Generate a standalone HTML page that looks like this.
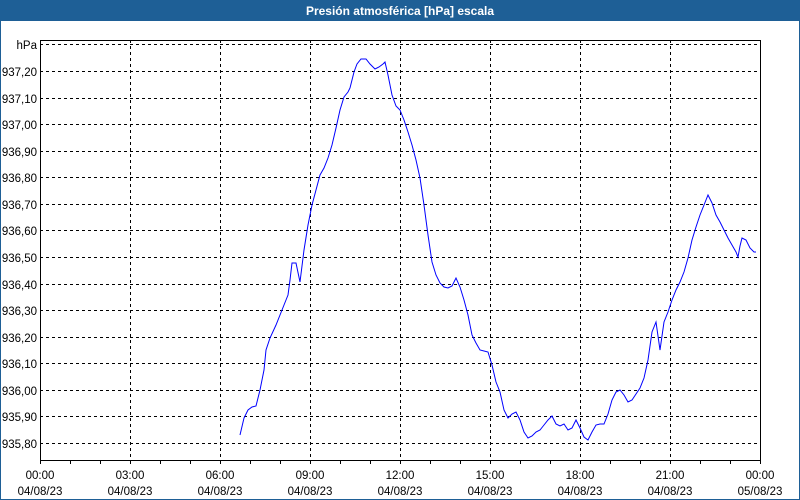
<!DOCTYPE html>
<html><head><meta charset="utf-8"><style>
html,body{margin:0;padding:0;width:800px;height:500px;overflow:hidden;background:#fff;}
svg{display:block;font-family:"Liberation Sans",Arial,sans-serif;}
</style></head><body>
<svg width="800" height="500" viewBox="0 0 800 500" xmlns="http://www.w3.org/2000/svg">
<rect x="0" y="0" width="800" height="500" fill="#fff"/>
<rect x="0.5" y="0.5" width="799" height="499" fill="none" stroke="#1e5f96"/>
<rect x="0" y="0" width="800" height="21" fill="#1e5f96"/>
<text x="400" y="15" fill="#fff" font-size="12" font-weight="bold" text-anchor="middle">Presión atmosférica [hPa] escala</text>
<g stroke="#000" stroke-dasharray="3,3" stroke-width="1">
<line x1="40" y1="44.5" x2="760" y2="44.5"/>
<line x1="40" y1="71.5" x2="760" y2="71.5"/>
<line x1="40" y1="98.5" x2="760" y2="98.5"/>
<line x1="40" y1="124.5" x2="760" y2="124.5"/>
<line x1="40" y1="151.5" x2="760" y2="151.5"/>
<line x1="40" y1="177.5" x2="760" y2="177.5"/>
<line x1="40" y1="204.5" x2="760" y2="204.5"/>
<line x1="40" y1="230.5" x2="760" y2="230.5"/>
<line x1="40" y1="257.5" x2="760" y2="257.5"/>
<line x1="40" y1="284.5" x2="760" y2="284.5"/>
<line x1="40" y1="310.5" x2="760" y2="310.5"/>
<line x1="40" y1="337.5" x2="760" y2="337.5"/>
<line x1="40" y1="363.5" x2="760" y2="363.5"/>
<line x1="40" y1="390.5" x2="760" y2="390.5"/>
<line x1="40" y1="416.5" x2="760" y2="416.5"/>
<line x1="40" y1="443.5" x2="760" y2="443.5"/>
<line x1="130.5" y1="40" x2="130.5" y2="460"/>
<line x1="220.5" y1="40" x2="220.5" y2="460"/>
<line x1="310.5" y1="40" x2="310.5" y2="460"/>
<line x1="400.5" y1="40" x2="400.5" y2="460"/>
<line x1="490.5" y1="40" x2="490.5" y2="460"/>
<line x1="580.5" y1="40" x2="580.5" y2="460"/>
<line x1="670.5" y1="40" x2="670.5" y2="460"/>
</g>
<g stroke="#000" stroke-width="1" fill="none">
<path d="M40.5 40V460.5H760.5V40M40 40.5H760.5"/>
<path d="M40.5 460v4M70.5 460v4M100.5 460v4M130.5 460v4M160.5 460v4M190.5 460v4M220.5 460v4M250.5 460v4M280.5 460v4M310.5 460v4M340.5 460v4M370.5 460v4M400.5 460v4M430.5 460v4M460.5 460v4M490.5 460v4M520.5 460v4M550.5 460v4M580.5 460v4M610.5 460v4M640.5 460v4M670.5 460v4M700.5 460v4M730.5 460v4M760.5 460v4"/>
</g>
<g font-size="11.5" fill="#000" text-anchor="end">
<text x="37" y="49">hPa</text>
<text x="37" y="76">937,20</text><text x="37" y="103">937,10</text><text x="37" y="129">937,00</text>
<text x="37" y="156">936,90</text><text x="37" y="182">936,80</text><text x="37" y="209">936,70</text>
<text x="37" y="235">936,60</text><text x="37" y="262">936,50</text><text x="37" y="289">936,40</text>
<text x="37" y="315">936,30</text><text x="37" y="342">936,20</text><text x="37" y="368">936,10</text>
<text x="37" y="395">936,00</text><text x="37" y="421">935,90</text><text x="37" y="448">935,80</text>
</g>
<g font-size="11.5" fill="#000" text-anchor="middle">
<text x="40" y="479">00:00</text><text x="40" y="495">04/08/23</text>
<text x="130" y="479">03:00</text><text x="130" y="495">04/08/23</text>
<text x="220" y="479">06:00</text><text x="220" y="495">04/08/23</text>
<text x="310" y="479">09:00</text><text x="310" y="495">04/08/23</text>
<text x="400" y="479">12:00</text><text x="400" y="495">04/08/23</text>
<text x="490" y="479">15:00</text><text x="490" y="495">04/08/23</text>
<text x="580" y="479">18:00</text><text x="580" y="495">04/08/23</text>
<text x="670" y="479">21:00</text><text x="670" y="495">04/08/23</text>
<text x="760" y="479">00:00</text><text x="760" y="495">05/08/23</text>
</g>
<polyline fill="none" stroke="#0000ff" stroke-width="1" points="240,435 244,418 248,410 252,407 256,406 260,390 264,370 266,350 270,338 276,325 282,310 286,300 288,295 290,280 292,263 296,263 300,282 304,250 308,225 312,205 316,190 320,175 324,168 328,158 332,145 336,128 340,110 344,97 348,92 350,88 352,80 354,72 357,64 361,59 366,59 370,64 375,69 379,67 383,64 385,62 388,75 392,95 396,106 400,110 404,120 408,132 412,145 416,160 420,178 424,205 428,235 432,262 436,275 440,283 444,287 448,288 452,286 456,278 460,287 464,300 468,315 472,335 476,343 480,350 484,351 488,352 492,365 496,382 500,392 504,410 508,418 512,414 516,412 520,420 524,432 528,438 532,436 536,432 540,430 544,425 548,420 552,416 556,424 560,426 564,424 568,430 572,428 576,420 580,428 584,437 588,440 592,432 596,425 600,424 604,424 608,414 612,400 616,392 620,390 624,395 628,402 632,400 636,394 640,388 644,378 648,360 652,332 656,322 660,350 664,322 668,312 672,300 676,290 680,282 684,272 688,258 692,240 696,227 700,215 704,205 708,195 712,203 716,215 720,222 724,230 728,238 732,245 736,252 738,257 740,246 742,238 746,240 750,248 754,252 756,252"/>
</svg>
</body></html>
